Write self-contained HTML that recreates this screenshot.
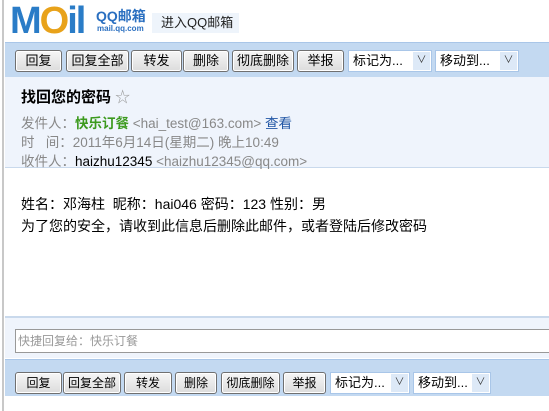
<!DOCTYPE html><html><head><meta charset="utf-8"><style>
*{margin:0;padding:0;box-sizing:border-box}
body{width:549px;height:411px;background:#fff;font-family:"Liberation Sans","Noto Sans CJK SC",sans-serif;font-size:13px;position:relative;overflow:hidden;color:#000}
.a{position:absolute}
.bar{position:absolute;left:5px;right:0;background:#c3d9f1;border-top:1px solid #a9c6e8}
.btn{position:absolute;height:22px;border:1px solid #707070;border-radius:3px;background:linear-gradient(#f6f6f6,#dcdcdc);font-size:13px;text-align:center;line-height:20px;box-shadow:inset 0 0 0 1px #fff}
.b2 .btn{font-size:12px}
.sel{position:absolute;height:22px;background:#fff;border:1px solid #a9c6e8;font-size:13px;line-height:20px;padding-left:4px}
.sel i{position:absolute;right:1px;top:1px;width:17px;height:18px;background:#dde9f7;font-style:normal;font-size:10px;text-align:center;line-height:18px;color:#333}
.g{color:#888}
.inf{font-size:13.5px}
</style></head><body>
<div class="a" style="left:2px;top:0;width:2px;height:411px;background:#c8c8c8"></div>
<div class="a" style="left:10px;top:5px;font-size:38px;font-weight:bold;color:#2a7cc7;letter-spacing:-2px;line-height:32px">M<span style="color:#e8a21a">O</span>il</div>
<div class="a" style="left:96px;top:9px;font-size:14px;font-weight:bold;color:#2a6fc0;line-height:14px">QQ邮箱</div>
<div class="a" style="left:97px;top:24px;font-size:8px;font-weight:bold;color:#2a6fc0">mail.qq.com</div>
<div class="a" style="left:152px;top:13px;width:87px;height:20px;background:#eef4fb;font-size:13px;line-height:20px;padding-left:9px;color:#222">进入QQ邮箱</div>
<div class="bar" style="top:42px;height:35px"></div>
<div class="btn" style="left:15px;top:50px;width:47px">回复</div>
<div class="btn" style="left:66px;top:50px;width:63px">回复全部</div>
<div class="btn" style="left:131px;top:50px;width:51px">转发</div>
<div class="btn" style="left:183px;top:50px;width:46px">删除</div>
<div class="btn" style="left:232px;top:50px;width:62px">彻底删除</div>
<div class="btn" style="left:297px;top:50px;width:47px">举报</div>
<div class="sel" style="left:348px;top:50px;width:84px">标记为...<i>∨</i></div>
<div class="sel" style="left:435px;top:50px;width:84px">移动到...<i>∨</i></div>
<div class="a" style="left:5px;top:77px;right:0;height:91px;background:#eff4fc;border-bottom:1px solid #c9d9ec"></div>
<div class="a" style="left:21px;top:86px;font-size:15px;font-weight:bold">找回您的密码 <span style="color:#999;font-weight:normal">☆</span></div>
<div class="a g inf" style="left:21px;top:112px">发件人：<b style="color:#3c9a1e">快乐订餐</b> &lt;hai_test@163.com&gt; <span style="color:#2156a5">查看</span></div>
<div class="a g inf" style="left:21px;top:131px">时&nbsp;&nbsp;&nbsp;间：2011年6月14日(星期二) 晚上10:49</div>
<div class="a g inf" style="left:21px;top:150px">收件人：<span style="color:#000">haizhu12345</span> &lt;haizhu12345@qq.com&gt;</div>
<div class="a" style="left:21px;top:194px;font-size:14px">姓名：邓海柱&nbsp; 昵称：hai046 密码：123 性别：男</div>
<div class="a" style="left:21px;top:216px;font-size:14px">为了您的安全，请收到此信息后删除此邮件，或者登陆后修改密码</div>
<div class="a" style="left:5px;top:316px;right:0;height:42px;background:#eff4fc;border-top:2px solid #c9d9ec"></div>
<div class="a" style="left:15px;top:329px;width:540px;height:24px;background:#fff;border:1px solid #999;font-size:12px;color:#999;line-height:22px;padding-left:2px">快捷回复给：快乐订餐</div>
<div class="bar" style="top:359px;height:37px"></div>
<div class="b2">
<div class="btn" style="left:15px;top:372px;width:47px">回复</div>
<div class="btn" style="left:63px;top:372px;width:58px">回复全部</div>
<div class="btn" style="left:124px;top:372px;width:48px">转发</div>
<div class="btn" style="left:175px;top:372px;width:42px">删除</div>
<div class="btn" style="left:221px;top:372px;width:59px">彻底删除</div>
<div class="btn" style="left:283px;top:372px;width:43px">举报</div>
</div>
<div class="sel" style="left:330px;top:372px;width:80px">标记为...<i>∨</i></div>
<div class="sel" style="left:413px;top:372px;width:78px">移动到...<i>∨</i></div>
</body></html>
